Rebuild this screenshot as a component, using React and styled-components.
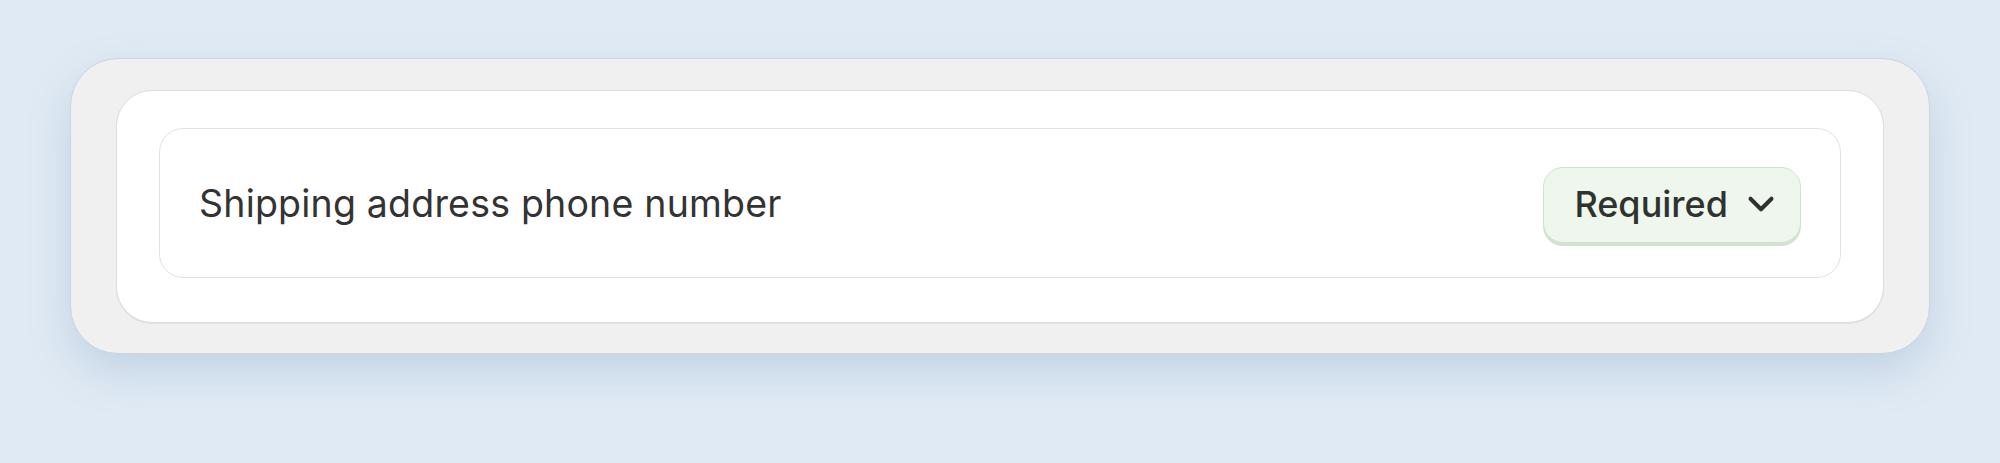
import styled, { createGlobalStyle } from 'styled-components';
import { ChevronDown } from 'lucide-react';

const GlobalStyle = createGlobalStyle`
  body {
    margin: 0;
    background: #e0eaf4;
    font-family: Inter, "Noto Sans", sans-serif;
  }
`;

export default function App() {
  return (
    <>
      <GlobalStyle />
      <Page>
        <OuterCard>
          <MiddleCard>
            <FieldRow>
              <FieldLabel>Shipping address phone number</FieldLabel>
              <SelectButton type="button">
                <span>Required</span>
                <ChevronDown size={42} strokeWidth={2.3} color="#2f332f" />
              </SelectButton>
            </FieldRow>
          </MiddleCard>
        </OuterCard>
      </Page>
    </>
  );
}

const Page = styled.div`
  padding: 58px 70px;
`;

const OuterCard = styled.div`
  background: #f0f0f0;
  border: 1.5px solid #c8d5e3;
  border-radius: 48px;
  padding: 31px 45px 30px;
  box-shadow: 0 18px 40px rgba(120, 150, 185, 0.28);
`;

const MiddleCard = styled.div`
  background: #ffffff;
  border: 1.5px solid #dcdcdc;
  border-radius: 36px;
  padding: 37px 42px 44px;
  box-shadow: 0 1px 1px rgba(0, 0, 0, 0.06);
`;

const FieldRow = styled.div`
  display: flex;
  align-items: center;
  justify-content: space-between;
  height: 148px;
  padding: 0 39px 0 39px;
  border: 1.5px solid #e2e2e2;
  border-radius: 24px;
`;

const FieldLabel = styled.span`
  font-size: 37.5px;
  font-weight: 400;
  color: #333333;
  letter-spacing: 0.2px;
`;

const SelectButton = styled.button`
  display: flex;
  align-items: center;
  height: 76px;
  margin-top: 3px;
  padding: 0 18px 2px 30px;
  background: #eef6ee;
  border: 1.5px solid #cce4cc;
  border-radius: 20px;
  box-shadow: 0 3px 0 #cfe5cf;
  font-family: Inter, "Noto Sans", sans-serif;
  font-size: 36px;
  font-weight: 500;
  color: #2f332f;
  cursor: pointer;

  svg {
    margin-left: 12px;
  }
`;
